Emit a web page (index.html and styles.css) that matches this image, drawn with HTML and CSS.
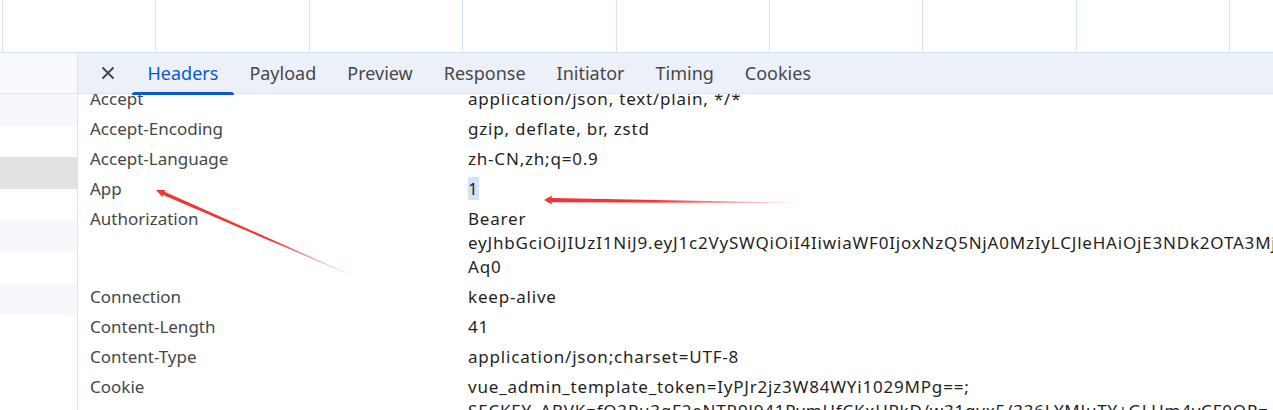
FILE: index.html
```html
<!DOCTYPE html>
<html lang="en">

<head>
    <meta charset="UTF-8">
    <meta name="viewport" content="width=device-width, initial-scale=1.0">
    <title>Network - Headers</title>
    <link rel="stylesheet" href="styles.css">
</head>

<body>
    <div class="timeline">
        <div class="tick"></div>
        <div class="tick"></div>
        <div class="tick"></div>
        <div class="tick"></div>
        <div class="tick"></div>
        <div class="tick"></div>
        <div class="tick"></div>
        <div class="tick"></div>
        <div class="tick"></div>
    </div>

    <div class="main">
        <div class="requests">
            <div class="requests-head"></div>
            <div class="req light"></div>
            <div class="req"></div>
            <div class="req selected"></div>
            <div class="req"></div>
            <div class="req light"></div>
            <div class="req"></div>
            <div class="req light"></div>
            <div class="req"></div>
        </div>

        <div class="details">
            <div class="tabs">
                <button class="close" title="Close">
                    <svg width="16" height="16" viewBox="0 0 16 16">
                        <path d="M2.5 2.5L13.5 13.5M13.5 2.5L2.5 13.5" stroke="#474747" stroke-width="1.9" fill="none" />
                    </svg>
                </button>
                <div class="tab active">Headers</div>
                <div class="tab">Payload</div>
                <div class="tab">Preview</div>
                <div class="tab">Response</div>
                <div class="tab">Initiator</div>
                <div class="tab">Timing</div>
                <div class="tab">Cookies</div>
            </div>

            <div class="header-view">
                <div class="header-list">
                    <div class="row">
                        <div class="name">Accept</div>
                        <div class="value">application/json, text/plain, */*</div>
                    </div>
                    <div class="row">
                        <div class="name">Accept-Encoding</div>
                        <div class="value">gzip, deflate, br, zstd</div>
                    </div>
                    <div class="row">
                        <div class="name">Accept-Language</div>
                        <div class="value">zh-CN,zh;q=0.9</div>
                    </div>
                    <div class="row">
                        <div class="name">App</div>
                        <div class="value"><span class="picked">1</span></div>
                    </div>
                    <div class="row">
                        <div class="name">Authorization</div>
                        <div class="value">Bearer<br>eyJhbGciOiJIUzI1NiJ9.eyJ1c2VySWQiOiI4IiwiaWF0IjoxNzQ5NjA0MzIyLCJleHAiOjE3NDk2OTA3MjJ9.mR2t0<br>Aq0</div>
                    </div>
                    <div class="row">
                        <div class="name">Connection</div>
                        <div class="value">keep-alive</div>
                    </div>
                    <div class="row">
                        <div class="name">Content-Length</div>
                        <div class="value">41</div>
                    </div>
                    <div class="row">
                        <div class="name">Content-Type</div>
                        <div class="value">application/json;charset=UTF-8</div>
                    </div>
                    <div class="row">
                        <div class="name">Cookie</div>
                        <div class="value">vue_admin_template_token=IyPJr2jz3W84WYi1029MPg==;<br>SECKEY_ABVK=fO3Pu3gF2eNTR9l941PvmHfCKxHPkD/w31gvx5/336LYMJuTY+GLUm4vCF0OP=</div>
                    </div>
                </div>
            </div>
        </div>
    </div>

    <!-- red annotation arrows drawn over the screenshot -->
    <svg class="marks" width="1273" height="410" viewBox="0 0 1273 410">
        <defs>
            <linearGradient id="fade1" gradientUnits="userSpaceOnUse" x1="0" y1="0" x2="223" y2="0">
                <stop offset="0" stop-color="#f03535" stop-opacity="1" />
                <stop offset="0.55" stop-color="#f03535" stop-opacity="1" />
                <stop offset="1" stop-color="#f03535" stop-opacity="0" />
            </linearGradient>
            <linearGradient id="fade2" gradientUnits="userSpaceOnUse" x1="0" y1="0" x2="263" y2="0">
                <stop offset="0" stop-color="#f03535" stop-opacity="1" />
                <stop offset="0.4" stop-color="#f03535" stop-opacity="1" />
                <stop offset="1" stop-color="#f03535" stop-opacity="0" />
            </linearGradient>
        </defs>
        <polygon transform="translate(156 190) rotate(23.57)" fill="url(#fade1)"
            points="0,0 9,-4 8,-1.8 223,-0.2 223,0.2 8,1.8 9,4" />
        <polygon transform="translate(544 200) rotate(0.65)" fill="url(#fade2)"
            points="0,0 8,-4.5 7.5,-2.2 263,-0.2 263,0.2 7.5,2.2 8,4.5" />
    </svg>
</body>

</html>
```

FILE: styles.css
```css
/* page */
body {
    margin: 0;
    width: 1273px;
    height: 410px;
    overflow: hidden;
    position: relative;
    background-color: white;
    font-family: "Noto Sans", "Open Sans", sans-serif;
    font-size: 17px;
}

/* waterfall ruler */
.timeline {
    display: flex;
    height: 52px;
    padding-left: 2px;
    border-bottom: 1px solid #d3e3fd;
}

.tick {
    flex: 0 0 153.4px;
    box-sizing: border-box;
    border-left: 1px solid #d3e3fd;
}

.main {
    display: flex;
    height: 357px;
}

/* request list on the left */
.requests {
    width: 77px;
    flex: none;
    border-right: 1px solid #d3e3fd;
}

.requests-head {
    height: 40px;
    background-color: #f8fafd;
    border-bottom: 1px solid #d3e3fd;
}

.req {
    height: 31.5px;
}

.req.light {
    background-color: #f6f8fc;
}

.req.selected {
    background-color: #e1e3e1;
}

/* details panel */
.details {
    flex: 1;
    min-width: 0;
    display: flex;
    flex-direction: column;
}

.tabs {
    height: 40px;
    display: flex;
    align-items: stretch;
    background-color: #ecf1f9;
    border-bottom: 1px solid #d3e3fd;
    position: relative;
    z-index: 1;
    font-size: 18px;
}

.close {
    align-self: center;
    width: 24px;
    height: 24px;
    margin: 0 12px 0 18px;
    padding: 0;
    border: none;
    background: none;
    display: flex;
    align-items: center;
    justify-content: center;
}

.tab {
    position: relative;
    padding: 0 15.5px;
    line-height: 40px;
    color: #474747;
}

.tab.active {
    color: #0b57d0;
}

.tab.active::after {
    content: "";
    position: absolute;
    left: 0;
    right: 0;
    bottom: -2px;
    height: 3px;
    background-color: #0b57d0;
    border-radius: 3px 3px 0 0;
}

.header-view {
    flex: 1;
    overflow: hidden;
}

.header-list {
    margin-top: -10px;
}

.row {
    display: flex;
    padding: 3px 0 3px 12px;
    line-height: 24px;
}

.name {
    width: 378px;
    flex: none;
    color: #474747;
}

.value {
    color: #1f1f1f;
    white-space: nowrap;
    letter-spacing: 0.8px;
}

.picked {
    background-color: #d3e3fd;
}

.marks {
    position: absolute;
    left: 0;
    top: 0;
    pointer-events: none;
}
```
